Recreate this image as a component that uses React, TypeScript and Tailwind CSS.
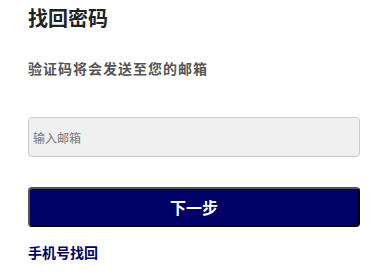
export default function App() {
  return (
    <div className="w-[385px] h-[275px] bg-white pl-[28px] pt-[4px] font-['Noto_Sans_CJK_SC','Noto_Sans',sans-serif]">
      <h1 className="text-[20px] leading-[28px] font-bold text-[#222]">找回密码</h1>
      <p className="mt-[28px] text-[14px] leading-[16px] font-bold tracking-[1px] text-[#555]">
        验证码将会发送至您的邮箱
      </p>
      <input
        type="email"
        placeholder="输入邮箱"
        className="mt-[41px] block w-[332px] h-[40px] rounded-[4px] border border-[#ccc] bg-[#f0f0f0] px-[4px] text-[12px] outline-none placeholder:text-[#777]"
      />
      <button
        type="button"
        className="mt-[30px] block w-[332px] h-[40px] rounded-[4px] border-2 border-t-[#555] border-l-[#555] border-b-black border-r-black bg-[#000066] text-white text-[16px] font-bold"
      >
        下一步
      </button>
      <a href="#" className="mt-[15px] block w-fit text-[14px] leading-[20px] font-bold text-[#000066]">
        手机号找回
      </a>
    </div>
  );
}
